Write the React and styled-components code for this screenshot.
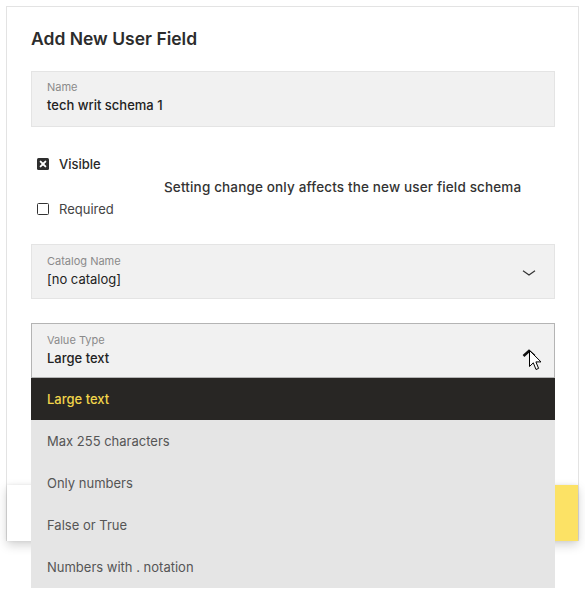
import styled, { createGlobalStyle } from "styled-components";

const GlobalStyle = createGlobalStyle`
  body {
    margin: 0;
    background: #fff;
    font-family: Inter, Roboto, "Liberation Sans", Arial, sans-serif;
  }
`;

const valueTypes = [
  "Large text",
  "Max 255 characters",
  "Only numbers",
  "False or True",
  "Numbers with . notation",
];

function App() {
  return (
    <Page>
      <GlobalStyle />
      <Card>
        <Body>
          <Title>Add New User Field</Title>

          <Field>
            <Label>Name</Label>
            <Value>tech writ schema 1</Value>
          </Field>

          <SettingsRow>
            <Checks>
              <CheckRow>
                <CheckedBox viewBox="0 0 12 12">
                  <rect x="0" y="0" width="12" height="12" rx="1.5" fill="#2e2e2e" />
                  <path d="M3.6 3.6 L8.4 8.4 M8.4 3.6 L3.6 8.4" stroke="#fff" strokeWidth="1.9" strokeLinecap="round" />
                </CheckedBox>
                <CheckLabel $checked>Visible</CheckLabel>
              </CheckRow>
              <CheckRow>
                <EmptyBox />
                <CheckLabel>Required</CheckLabel>
              </CheckRow>
            </Checks>
            <Notice>Setting change only affects the new user field schema</Notice>
          </SettingsRow>

          <SelectField>
            <div>
              <Label>Catalog Name</Label>
              <Value $large>[no catalog]</Value>
            </div>
            <Chevron viewBox="0 0 14 6">
              <path d="M1 0.8 L7 5 L13 0.8" fill="none" stroke="#333" strokeWidth="1.2" />
            </Chevron>
          </SelectField>

          <SelectWrap>
            <SelectField $open>
              <div>
                <Label>Value Type</Label>
                <Value $strong>Large text</Value>
              </div>
              <Chevron viewBox="0 0 14 8" $up>
                <path d="M1.5 7 L7 2 L12.5 7" fill="none" stroke="#111" strokeWidth="2.6" />
              </Chevron>
              <Cursor viewBox="0 0 13 21">
                <path
                  d="M0.5 0.5 L0.5 16.5 L4.3 12.8 L7 19.5 L9.6 18.4 L6.9 11.9 L12 11.9 Z"
                  fill="#fff"
                  stroke="#000"
                  strokeWidth="1"
                  strokeLinejoin="round"
                />
              </Cursor>
            </SelectField>
            <Menu>
              {valueTypes.map((t, i) => (
                <MenuItem key={t} $active={i === 0}>
                  {t}
                </MenuItem>
              ))}
            </Menu>
          </SelectWrap>
        </Body>

        <Footer>
          <SaveButton>Save</SaveButton>
        </Footer>
      </Card>
    </Page>
  );
}

export default App;

const Page = styled.div`
  padding: 6px 0 0 6px;
  width: 573px;
  min-height: 592px;
`;

const Card = styled.div`
  border: 1px solid #e3e3e3;
  border-bottom: none;
  background: #fff;
`;

const Body = styled.div`
  padding: 21px 23px 107px 24px;
`;

const Title = styled.h2`
  margin: 0;
  font-size: 17.5px;
  line-height: 22px;
  font-weight: 600;
  color: #2c2c2c;
`;

const Field = styled.div`
  margin-top: 21px;
  height: 56px;
  box-sizing: border-box;
  padding: 8px 15px 0;
  background: #f1f1f1;
  border: 1px solid #e4e4e4;
`;

const Label = styled.div`
  font-size: 11px;
  line-height: 14px;
  color: #8a8a8a;
`;

const Value = styled.div`
  margin-top: 2px;
  font-size: 13px;
  line-height: 18px;
  font-weight: ${(p) => (p.$strong || !p.$large ? 500 : 400)};
  color: #222;
`;

const SettingsRow = styled.div`
  display: flex;
  align-items: center;
  margin-top: 27px;
`;

const Checks = styled.div`
  display: flex;
  flex-direction: column;
  gap: 25px;
  width: 127px;
  padding-left: 6px;
`;

const CheckRow = styled.div`
  display: flex;
  align-items: center;
  gap: 10px;
  height: 20px;
`;

const CheckedBox = styled.svg`
  width: 12px;
  height: 12px;
  display: block;
`;

const EmptyBox = styled.span`
  width: 12px;
  height: 12px;
  box-sizing: border-box;
  border: 1.5px solid #333;
  border-radius: 1.5px;
`;

const CheckLabel = styled.span`
  font-size: 13px;
  font-weight: ${(p) => (p.$checked ? 500 : 400)};
  color: ${(p) => (p.$checked ? "#2a2a2a" : "#444")};
`;

const Notice = styled.div`
  font-size: 13.5px;
  letter-spacing: 0.15px;
  font-weight: 500;
  color: #333;
`;

const SelectField = styled.div`
  position: relative;
  display: flex;
  align-items: center;
  justify-content: space-between;
  margin-top: ${(p) => (p.$open ? "0" : "25px")};
  height: 55px;
  box-sizing: border-box;
  padding: 0 18px 2px 15px;
  background: #f1f1f1;
  border: 1px solid ${(p) => (p.$open ? "#b4b4b4" : "#e4e4e4")};
`;

const Chevron = styled.svg`
  width: 14px;
  height: ${(p) => (p.$up ? "8px" : "6px")};
  margin-top: ${(p) => (p.$up ? "6px" : "4px")};
  display: block;
`;

const Cursor = styled.svg`
  position: absolute;
  left: 497px;
  top: 26px;
  width: 13px;
  height: 21px;
`;

const SelectWrap = styled.div`
  position: relative;
  margin-top: 24px;
`;

const Menu = styled.ul`
  position: absolute;
  top: 100%;
  left: 0;
  right: 0;
  z-index: 10;
  margin: 0;
  padding: 0;
  list-style: none;
`;

const MenuItem = styled.li`
  height: 42px;
  display: flex;
  align-items: center;
  padding-left: 16px;
  font-size: 13px;
  font-weight: ${(p) => (p.$active ? 500 : 400)};
  background: ${(p) => (p.$active ? "#282624" : "#e5e5e5")};
  color: ${(p) => (p.$active ? "#f2d54b" : "#555")};
`;

const Footer = styled.div`
  height: 56px;
  display: flex;
  justify-content: flex-end;
  background: #fff;
  box-shadow: 0 4px 10px rgba(0, 0, 0, 0.18), 0 0 3px rgba(0, 0, 0, 0.08);
`;

const SaveButton = styled.button`
  width: 130px;
  border: none;
  background: #fce265;
  font-family: inherit;
  font-size: 14px;
  font-weight: 500;
  color: #222;
`;
